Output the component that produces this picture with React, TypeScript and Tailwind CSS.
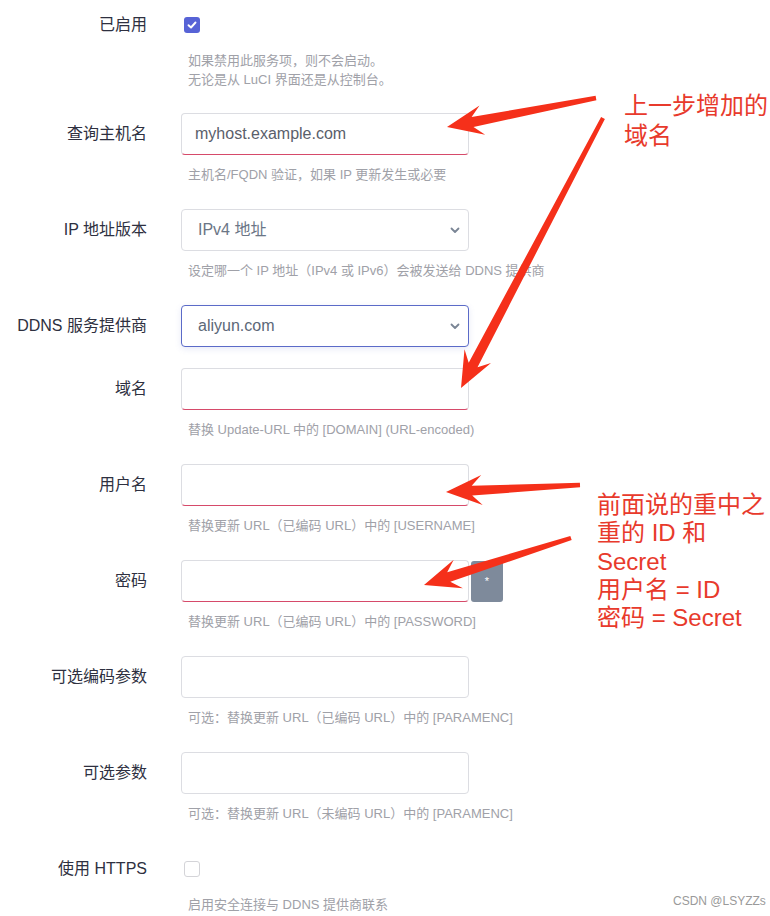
import React from "react";

type Row = {
  label: string;
  kind: "check" | "input" | "select" | "password";
  value?: string;
  checked?: boolean;
  invalid?: boolean;
  focused?: boolean;
  help?: string[];
  mb: string;
};

const ROWS: Row[] = [
  {
    label: "已启用",
    kind: "check",
    checked: true,
    help: ["如果禁用此服务项，则不会启动。", "无论是从 LuCI 界面还是从控制台。"],
    mb: "mb-[24px]",
  },
  {
    label: "查询主机名",
    kind: "input",
    value: "myhost.example.com",
    invalid: true,
    help: ["主机名/FQDN 验证，如果 IP 更新发生或必要"],
    mb: "mb-[24px]",
  },
  {
    label: "IP 地址版本",
    kind: "select",
    value: "IPv4 地址",
    help: ["设定哪一个 IP 地址（IPv4 或 IPv6）会被发送给 DDNS 提供商"],
    mb: "mb-[24px]",
  },
  { label: "DDNS 服务提供商", kind: "select", value: "aliyun.com", focused: true, mb: "mb-[21px]" },
  {
    label: "域名",
    kind: "input",
    invalid: true,
    help: ["替换 Update-URL 中的 [DOMAIN] (URL-encoded)"],
    mb: "mb-[24px]",
  },
  {
    label: "用户名",
    kind: "input",
    invalid: true,
    help: ["替换更新 URL（已编码 URL）中的 [USERNAME]"],
    mb: "mb-[24px]",
  },
  {
    label: "密码",
    kind: "password",
    invalid: true,
    help: ["替换更新 URL（已编码 URL）中的 [PASSWORD]"],
    mb: "mb-[24px]",
  },
  {
    label: "可选编码参数",
    kind: "input",
    help: ["可选：替换更新 URL（已编码 URL）中的 [PARAMENC]"],
    mb: "mb-[24px]",
  },
  {
    label: "可选参数",
    kind: "input",
    help: ["可选：替换更新 URL（未编码 URL）中的 [PARAMENC]"],
    mb: "mb-[24px]",
  },
  { label: "使用 HTTPS", kind: "check", help: ["启用安全连接与 DDNS 提供商联系"], mb: "mb-0" },
];

// arrow polygon with a tapering shaft and swept-back barbs
function arrowPoints(tx: number, ty: number, px: number, py: number) {
  const len = Math.hypot(px - tx, py - ty);
  const dx = (px - tx) / len;
  const dy = (py - ty) / len;
  const nx = -dy;
  const ny = dx;
  const L = 30;
  const H = 15;
  const w0 = 2.2;
  const w1 = 5;
  const bx = px - dx * L;
  const by = py - dy * L;
  const sweep = 6;
  const pts: [number, number][] = [
    [tx + nx * w0, ty + ny * w0],
    [bx + nx * w1 + dx * 4, by + ny * w1 + dy * 4],
    [bx + nx * H - dx * sweep, by + ny * H - dy * sweep],
    [px, py],
    [bx - nx * H - dx * sweep, by - ny * H - dy * sweep],
    [bx - nx * w1 + dx * 4, by - ny * w1 + dy * 4],
    [tx - nx * w0, ty - ny * w0],
  ];
  return pts.map((p) => p.map((v) => v.toFixed(1)).join(",")).join(" ");
}

function Chevron() {
  return (
    <svg width="10" height="7" viewBox="0 0 10 7" className="text-[#7a8595]">
      <path d="M1.5 1.5 L5 5 L8.5 1.5" fill="none" stroke="currentColor" strokeWidth="1.8" strokeLinecap="round" strokeLinejoin="round" />
    </svg>
  );
}

function Control({ row }: { row: Row }) {
  if (row.kind === "check") {
    return (
      <div className="flex h-[42px] items-center pl-[3px]">
        {row.checked ? (
          <div className="flex h-4 w-4 items-center justify-center rounded-[3px] bg-[#5763d6]">
            <svg width="10" height="8" viewBox="0 0 10 8">
              <path d="M1.5 4.2 L4 6.5 L8.5 1.5" fill="none" stroke="white" strokeWidth="1.9" strokeLinecap="round" strokeLinejoin="round" />
            </svg>
          </div>
        ) : (
          <div className="h-4 w-4 rounded-[3px] border border-[#d4d4d8] bg-white" />
        )}
      </div>
    );
  }
  if (row.kind === "select") {
    return (
      <div
        className={
          row.focused
            ? "flex h-[42px] w-[288px] items-center justify-between rounded-[4px] border border-[#5b6bc8] bg-white pl-[16px] pr-[8px] text-[16px] text-[#5c6878] shadow-[0_2px_6px_rgba(91,107,200,0.15)]"
            : "flex h-[42px] w-[288px] items-center justify-between rounded-[4px] border border-[#dcdde2] bg-white pl-[16px] pr-[8px] text-[16px] text-[#6b7686]"
        }
      >
        <span>{row.value}</span>
        <Chevron />
      </div>
    );
  }
  const box = (
    <div
      className={
        row.invalid
          ? "flex h-[42px] w-[288px] items-center rounded-[4px] border border-[#dcdde2] border-b-[#d64a6a] bg-white pl-[13px] text-[16px] text-[#5a606b]"
          : "flex h-[42px] w-[288px] items-center rounded-[4px] border border-[#dcdde2] bg-white pl-[13px] text-[16px] text-[#5a606b]"
      }
    >
      {row.value}
    </div>
  );
  if (row.kind === "password") {
    return (
      <div className="flex items-center gap-[2px]">
        {box}
        <div className="flex h-[41px] w-[32px] items-center justify-center rounded-[3px] bg-[#7e8a9b] text-[11px] leading-none text-white">
          *
        </div>
      </div>
    );
  }
  return box;
}

export default function App() {
  return (
    <div
      className="relative h-[916px] w-[770px] overflow-hidden bg-white"
      style={{ fontFamily: '"Liberation Sans", "Noto Sans CJK SC", sans-serif' }}
    >
      <div className="pt-[4px]">
        {ROWS.map((row) => (
          <div key={row.label} className={`flex ${row.mb}`}>
            <div className="flex h-[42px] w-[147px] shrink-0 items-center justify-end text-[16px] text-[#2e3040]">
              {row.label}
            </div>
            <div className="ml-[34px] flex flex-col">
              <Control row={row} />
              {row.help && (
                <div
                  className={
                    row.kind === "check"
                      ? "mt-[5px] whitespace-nowrap pl-[7px] text-[13px] leading-[19px] text-[#a0a1a8]"
                      : "mt-[10px] whitespace-nowrap pl-[7px] text-[13px] leading-5 text-[#a0a1a8]"
                  }
                >
                  {row.help.map((h) => (
                    <div key={h}>{h}</div>
                  ))}
                </div>
              )}
            </div>
          </div>
        ))}
      </div>

      {/* red annotation arrows drawn over the form */}
      <svg className="pointer-events-none absolute inset-0" width="770" height="916">
        <polygon points={arrowPoints(596, 98, 447, 127)} fill="#f5301a" />
        <polygon points={arrowPoints(603, 118, 461, 388)} fill="#f5301a" />
        <polygon points={arrowPoints(580, 485, 446, 492)} fill="#f5301a" />
        <polygon points={arrowPoints(571, 538, 424, 585)} fill="#f5301a" />
      </svg>

      <div className="absolute left-[624px] top-[91px] text-[24px] leading-[30px] text-[#e83a2c]">
        <div>上一步增加的</div>
        <div>域名</div>
      </div>

      <div className="absolute left-[597px] top-[491px] text-[24px] leading-[28.3px] text-[#e83a2c]">
        <div>前面说的重中之</div>
        <div>重的 ID 和</div>
        <div>Secret</div>
        <div>用户名 = ID</div>
        <div>密码 = Secret</div>
      </div>

      <div className="absolute left-[673px] top-[892px] text-[12px] text-[#9a9a9a]">CSDN @LSYZZs</div>
    </div>
  );
}
